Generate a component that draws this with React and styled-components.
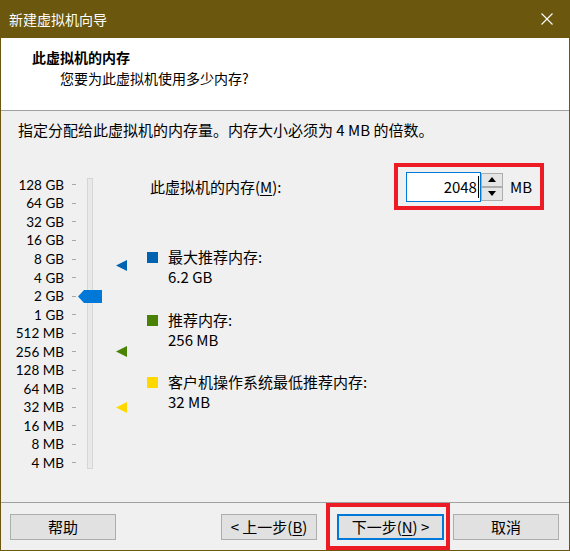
import React from "react";
import styled, { createGlobalStyle } from "styled-components";

const FONT = `"Microsoft YaHei", "Noto Sans CJK SC", "Noto Sans", sans-serif`;
const SCALE_FONT = `"Lato", "Noto Sans CJK SC", sans-serif`;

const GlobalStyle = createGlobalStyle`
  html, body { margin: 0; padding: 0; background: #f0f0f0; }
  body { font-family: ${FONT}; -webkit-font-smoothing: antialiased; }
  * { box-sizing: border-box; }
`;

const Window = styled.div`
  width: 570px;
  height: 551px;
  display: flex;
  flex-direction: column;
  background: #f0f0f0;
  border: 1px solid #6b570d;
  border-top: none;
  font-family: ${FONT};
  color: #000;
  overflow: hidden;
`;

const TitleBar = styled.div`
  height: 38px;
  flex: none;
  background: #6b570d;
  display: flex;
  align-items: center;
  justify-content: space-between;
  padding: 0 16px 0 8px;
  color: #fff;
  font-size: 14px;
  line-height: 20px;
`;

const CloseIcon = () => (
  <svg width="12" height="12" viewBox="0 0 12 12">
    <path d="M0.5 0.5 L11.5 11.5 M11.5 0.5 L0.5 11.5" stroke="#fff" strokeWidth="1.1" />
  </svg>
);

const Header = styled.div`
  height: 73px;
  flex: none;
  background: #fff;
  border-bottom: 1px solid #a0a0a0;
  padding: 9px 0 0 31px;
`;

const HeaderTitle = styled.div`
  font-size: 14px;
  line-height: 20px;
  font-weight: 700;
`;

const HeaderSub = styled.div`
  font-size: 14px;
  line-height: 22px;
  padding-left: 28px;
`;

const Body = styled.div`
  flex: 1;
  display: flex;
  flex-direction: column;
  padding-top: 9px;
`;

const Instruction = styled.div`
  font-size: 15px;
  line-height: 20px;
  padding-left: 17px;
`;

const MainArea = styled.div`
  display: flex;
  margin-top: 23px;
`;

const SliderBlock = styled.div`
  position: relative;
  width: 146px;
  flex: none;
  display: flex;
  padding-top: 12.7px;
`;

const Scale = styled.div`
  display: grid;
  grid-template-rows: repeat(16, 18.53px);
`;

const ScaleRow = styled.div`
  display: flex;
  align-items: center;
`;

const ScaleLabel = styled.span`
  width: 63px;
  text-align: right;
  font-family: ${SCALE_FONT};
  font-size: 13.5px;
  line-height: 18px;
  white-space: nowrap;
`;

const Tick = styled.span`
  width: 4px;
  height: 1px;
  margin-left: 8px;
  background: #a8a8a8;
`;

const Track = styled.div`
  width: 6px;
  height: 291px;
  margin: 2.3px 0 0 11px;
  background: #e7eae9;
  border: 1px solid #d6d6d6;
`;

const Thumb = styled.svg`
  position: absolute;
  left: 77px;
`;

const Marker = styled.svg`
  position: absolute;
  left: 115px;
`;

const RightPanel = styled.div`
  flex: 1;
  display: flex;
  flex-direction: column;
`;

const MemoryRow = styled.div`
  display: flex;
  align-items: center;
  height: 47px;
  padding-right: 25px;
`;

const MemLabel = styled.span`
  font-size: 15px;
  line-height: 20px;
  margin-left: 3px;
`;

const Mnemonic = styled.span`
  text-decoration: underline;
  text-underline-offset: 2px;
`;

const Annotation = styled.div`
  border: 4px solid #ed1c24;
  display: flex;
  align-items: center;
  box-sizing: border-box;
`;

const TopAnnotation = styled(Annotation)`
  margin-left: auto;
  height: 47px;
  padding: 0 8px 0 8px;
`;

const SpinInput = styled.div`
  width: 75px;
  height: 30px;
  background: #fff;
  border: 1px solid #0078d7;
  display: flex;
  align-items: center;
  justify-content: flex-end;
  padding-right: 1px;
  font-size: 15px;
`;

const Caret = styled.span`
  width: 1px;
  height: 22px;
  background: #000;
  margin-left: 1px;
`;

const Spinner = styled.div`
  width: 22px;
  height: 30px;
  display: flex;
  flex-direction: column;
  padding: 1px 0;
`;

const SpinButton = styled.div`
  flex: 1;
  border: 1px solid #adadad;
  background: #e5e5e5;
  display: flex;
  align-items: center;
  justify-content: center;
`;

const Unit = styled.span`
  font-size: 15px;
  margin-left: 7px;
`;

const Legend = styled.div`
  display: flex;
  flex-direction: column;
  gap: 22.5px;
  margin-top: 37px;
`;

const LegendItem = styled.div`
  display: flex;
  align-items: flex-start;
`;

const Swatch = styled.span`
  width: 11px;
  height: 11px;
  flex: none;
  margin-top: 5px;
  background: ${(p) => p.$color};
`;

const LegendText = styled.div`
  margin-left: 10px;
  font-size: 15px;
  line-height: 20px;
`;

const Footer = styled.div`
  height: 48px;
  flex: none;
  border-top: 1px solid #a0a0a0;
  display: flex;
  align-items: center;
  padding: 0 10px 0 9px;
`;

const Button = styled.div`
  height: 26px;
  width: ${(p) => p.$w || 106}px;
  border: ${(p) => (p.$default ? "2px solid #0078d7" : "1px solid #adadad")};
  background: #e1e1e1;
  display: flex;
  align-items: center;
  justify-content: center;
  font-size: 15px;
  line-height: 20px;
  white-space: pre;
`;

const Spacer = styled.div`
  flex: 1;
`;

const BottomAnnotation = styled(Annotation)`
  height: 47px;
  margin: 0 3px 0 9px;
  padding: 0 2px 0 7px;
`;

const labels = [
  "128 GB", "64 GB", "32 GB", "16 GB", "8 GB", "4 GB", "2 GB", "1 GB",
  "512 MB", "256 MB", "128 MB", "64 MB", "32 MB", "16 MB", "8 MB", "4 MB",
];

const ROW = 18.53;
const FIRST = 12.7 + ROW / 2;
const posFor = (mb) => FIRST + (17 - Math.log2(mb)) * ROW;

const markers = [
  { mb: 6.2 * 1024, color: "#0063b1" },
  { mb: 256, color: "#498205" },
  { mb: 32, color: "#ffd800" },
];

const legend = [
  { color: "#0063b1", label: "最大推荐内存:", value: "6.2 GB" },
  { color: "#498205", label: "推荐内存:", value: "256 MB" },
  { color: "#ffd800", label: "客户机操作系统最低推荐内存:", value: "32 MB" },
];

export default function App() {
  const thumbY = posFor(2048);
  return (
    <>
      <GlobalStyle />
      <Window>
        <TitleBar>
          <span>新建虚拟机向导</span>
          <CloseIcon />
        </TitleBar>
        <Header>
          <HeaderTitle>此虚拟机的内存</HeaderTitle>
          <HeaderSub>您要为此虚拟机使用多少内存?</HeaderSub>
        </Header>
        <Body>
          <Instruction>指定分配给此虚拟机的内存量。内存大小必须为 4 MB 的倍数。</Instruction>
          <MainArea>
            <SliderBlock>
              <Scale>
                {labels.map((l) => (
                  <ScaleRow key={l}>
                    <ScaleLabel>{l}</ScaleLabel>
                    <Tick />
                  </ScaleRow>
                ))}
              </Scale>
              <Track />
              {markers.map((m) => (
                <Marker
                  key={m.color}
                  width="12"
                  height="11"
                  viewBox="0 0 12 11"
                  style={{ top: posFor(m.mb) - 5.5 }}
                >
                  <polygon points="0,5.5 11,0 11,11" fill={m.color} />
                </Marker>
              ))}
              <Thumb width="24" height="13" viewBox="0 0 24 13" style={{ top: thumbY - 6.5 }}>
                <polygon points="0,6.5 6,0 24,0 24,13 6,13" fill="#0078d7" />
              </Thumb>
            </SliderBlock>
            <RightPanel>
              <MemoryRow>
                <MemLabel>
                  此虚拟机的内存(<Mnemonic>M</Mnemonic>):
                </MemLabel>
                <TopAnnotation>
                  <SpinInput>
                    2048
                    <Caret />
                  </SpinInput>
                  <Spinner>
                    <SpinButton>
                      <svg width="8" height="5" viewBox="0 0 8 5">
                        <polygon points="0,5 4,0 8,5" fill="#000" />
                      </svg>
                    </SpinButton>
                    <SpinButton>
                      <svg width="8" height="5" viewBox="0 0 8 5">
                        <polygon points="0,0 8,0 4,5" fill="#000" />
                      </svg>
                    </SpinButton>
                  </Spinner>
                  <Unit>MB</Unit>
                </TopAnnotation>
              </MemoryRow>
              <Legend>
                {legend.map((it) => (
                  <LegendItem key={it.label}>
                    <Swatch $color={it.color} />
                    <LegendText>
                      <div>{it.label}</div>
                      <div>{it.value}</div>
                    </LegendText>
                  </LegendItem>
                ))}
              </Legend>
            </RightPanel>
          </MainArea>
        </Body>
        <Footer>
          <Button>帮助</Button>
          <Spacer />
          <Button $w={96}>
            {"< 上一步("}
            <Mnemonic>B</Mnemonic>
            {")"}
          </Button>
          <BottomAnnotation>
            <Button $default $w={107}>
              {"下一步("}
              <Mnemonic>N</Mnemonic>
              {") >"}
            </Button>
          </BottomAnnotation>
          <Button>取消</Button>
        </Footer>
      </Window>
    </>
  );
}
